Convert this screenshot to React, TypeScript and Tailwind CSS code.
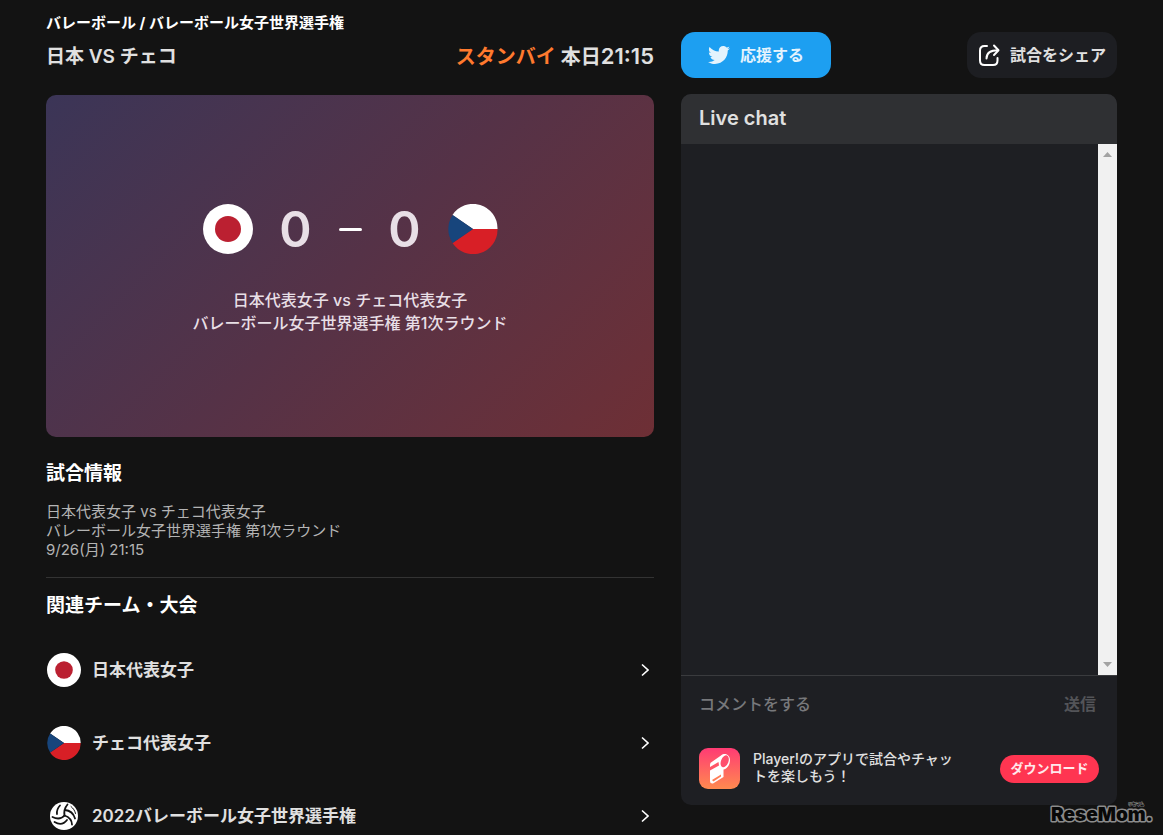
import { FaTwitter } from "react-icons/fa";

const JapanFlag = ({ className }: { className: string }) => (
    <svg viewBox="0 0 50 50" className={className} aria-hidden="true">
        <circle cx="25" cy="25" r="25" fill="#fff" />
        <circle cx="25" cy="25" r="13" fill="#bb2031" />
    </svg>
);

const CzechFlag = ({ className }: { className: string }) => (
    <svg viewBox="0 0 50 50" className={className} aria-hidden="true">
        <path d="M4.5 11 A24.5 24.5 0 0 1 49.5 25 H25 Z" fill="#fff" />
        <path d="M4.5 39 A24.5 24.5 0 0 0 49.5 25 H25 Z" fill="#d81f26" />
        <path d="M4.7 11 A24.5 24.5 0 0 0 4.7 39 L25 25 Z" fill="#17457c" />
    </svg>
);

const BallIcon = ({ className }: { className: string }) => (
    <svg viewBox="0 0 34 34" className={className} aria-hidden="true">
        <circle cx="17" cy="17" r="14" fill="#fff" />
        <g fill="none" stroke="#131313" strokeWidth="1.8" strokeLinecap="round">
            <path d="M10 15 C9.500 11.5 10.7 9 13 6.500" />
            <path d="M17.500 16.500 C16.800 12.500 17.700 8.800 20.500 5.500" />
            <path d="M17.800 11 C22.500 11.300 26.500 14.500 28 19.500" />
            <path d="M24 7.500 C26.500 9.500 28 12 28.500 14.500" strokeWidth="1" />
            <path d="M17.500 16.500 C14.500 19.800 10 20.300 5.500 18" />
            <path d="M7.500 23 C12.500 26 17 25 20 21" />
            <path d="M17.500 16.500 C22 18 24.800 21 25 25.500" />
        </g>
    </svg>
);

const ShareIcon = () => (
    <svg viewBox="0 0 22 24" className="h-6 w-[22px]" fill="none" stroke="#fff" strokeWidth="2" strokeLinecap="round" strokeLinejoin="round" aria-hidden="true">
        <path d="M9 3 H6.500 Q2 3 2 7.500 V17.500 Q2 22 6.500 22 H15 Q19.500 22 19.500 17.500 V15" />
        <path d="M8.500 15.500 C8.500 10 12 7.300 20 7.300" />
        <path d="M16 2.500 L20.500 7.300 L16 12" />
    </svg>
);

const WhistleIcon = () => (
    <svg viewBox="0 0 41 41" className="size-[41px] shrink-0" aria-hidden="true">
        <defs>
            <linearGradient id="whistle" x1="0" y1="0" x2="0" y2="1">
                <stop offset="0" stopColor="#ff3b74" />
                <stop offset="1" stopColor="#ff8a4f" />
            </linearGradient>
        </defs>
        <rect width="41" height="41" rx="9" fill="url(#whistle)" />
        <path d="M12 14.500 L22 7.500 C26 4 31 7 31 12 C31 17 28 21 24.500 21.500 L24.500 29 L14 35.500 Q11 36 11 33 V17 Q11 15.200 12 14.500 Z" fill="#fff" />
        <ellipse cx="25.700" cy="13.300" rx="3.700" ry="6.200" transform="rotate(22 25.700 13.300)" fill="#ff4f6d" />
        <path d="M11 19 L19.500 14 L20 17.500 L11 22.500 Z" fill="#ff5668" />
        <path d="M13 32 L22 26.500 V28.500 L14.500 33.500 Z" fill="#ff7d56" />
    </svg>
);

const Chevron = () => (
    <svg viewBox="0 0 8 14" className="mr-[5px] ml-auto h-3.5 w-2 shrink-0" fill="none" stroke="#fff" strokeWidth="1.600" aria-hidden="true">
        <path d="M1 1.500 L7 7 L1 12.500" />
    </svg>
);

const related = [
    { name: "日本代表女子", Icon: JapanFlag },
    { name: "チェコ代表女子", Icon: CzechFlag },
    { name: "2022バレーボール女子世界選手権", Icon: BallIcon },
];

const MatchPanel = () => {
    return (
        <main className="min-w-0">
            <p className="pt-3 text-[15px] leading-[22px] font-bold text-white">バレーボール / バレーボール女子世界選手権</p>
            <div className="mt-[7px] flex items-center justify-between text-xl leading-[30px] font-semibold text-[#e0e0e0]">
                <h1 className="text-[19px]">日本 VS チェコ</h1>
                <p><span className="text-[#ff7a2e]">スタンバイ</span> 本日<time className="text-[22px]">21:15</time></p>
            </div>
            <section className="mt-[23px] flex aspect-video flex-col items-center rounded-[10px] bg-linear-135 from-[#3b3557] via-[#553247] to-[#6e2f35] pt-[104px] text-[#e8dfe6]">
                <div className="flex items-center">
                    <JapanFlag className="size-[50px]" />
                    <span className="w-[86px] pt-0.5 text-center text-[49px] leading-[58px] font-semibold">0</span>
                    <span className="h-[3px] w-[23px] rounded-full bg-white" />
                    <span className="w-[86px] pt-0.5 text-center text-[49px] leading-[58px] font-semibold">0</span>
                    <CzechFlag className="size-[50px]" />
                </div>
                <p className="mt-[30px] text-center text-base leading-[23px] font-medium">
                    日本代表女子 vs チェコ代表女子<br />
                    バレーボール女子世界選手権 第1次ラウンド
                </p>
            </section>
            <section className="border-b border-[#333] pt-[23px] pb-[18px]">
                <h2 className="text-[19px] leading-7 font-bold text-white">試合情報</h2>
                <p className="mt-[14px] text-[15px] leading-[19px] text-[#b4b4b4]">
                    日本代表女子 vs チェコ代表女子<br />
                    バレーボール女子世界選手権 第1次ラウンド<br />
                    9/26(月) 21:15
                </p>
            </section>
            <section className="pt-[14px]">
                <h2 className="text-[19px] leading-7 font-bold text-white">関連チーム・大会</h2>
                <ul className="mt-[33px] flex flex-col gap-[39px]">
                    {related.map(({ name, Icon }) => (
                        <li key={name}>
                            <a href="#" className="flex items-center text-[17px] leading-[34px] font-semibold text-[#e0e0e0]">
                                <Icon className="mr-[11px] ml-px size-[34px] shrink-0" />
                                {name}
                                <Chevron />
                            </a>
                        </li>
                    ))}
                </ul>
            </section>
        </main>
    );
};

const ChatPanel = () => {
    return (
        <aside className="pt-8">
            <div className="flex justify-between">
                <button className="flex h-[46px] w-[150px] items-center justify-center gap-2.5 rounded-[14px] bg-[#1d9ff1] text-base font-bold text-[#e4f3fd]">
                    <FaTwitter className="size-[22px]" />
                    応援する
                </button>
                <button className="flex h-[46px] w-[150px] items-center justify-center gap-2.5 rounded-[14px] bg-[#1d1e22] text-base font-bold whitespace-nowrap text-[#e0e0e0]">
                    <ShareIcon />
                    試合をシェア
                </button>
            </div>
            <div className="mt-4 overflow-hidden rounded-[10px] bg-[#1e1f23]">
                <h2 className="bg-[#2f3033] px-[18px] pb-0.5 text-xl leading-[48px] font-semibold text-[#e0e0e0]">Live chat</h2>
                <div className="flex min-h-[531px] justify-end">
                    <div className="flex w-[19px] flex-col items-center justify-between bg-[#f1f1f1] py-2">
                        <svg viewBox="0 0 9 5" className="h-[5px] w-[9px]" fill="#a3a3a3" aria-hidden="true"><path d="M0 5 L4.500 0 L9 5 Z" /></svg>
                        <svg viewBox="0 0 9 5" className="h-[5px] w-[9px]" fill="#a3a3a3" aria-hidden="true"><path d="M0 0 L4.500 5 L9 0 Z" /></svg>
                    </div>
                </div>
                <form className="flex items-center justify-between border-t border-[#3a3b3e] px-[18px] pt-4 text-base font-medium">
                    <input aria-label="コメント" placeholder="コメントをする" className="h-6 min-w-0 flex-1 bg-transparent text-[#e0e0e0] outline-none placeholder:text-[#77787b]" />
                    <button type="button" className="mr-[3px] font-bold text-[#535458]">送信</button>
                </form>
                <div className="flex items-center px-[18px] pt-8 pb-4">
                    <WhistleIcon />
                    <p className="ml-[13px] w-[200px] pb-1 text-sm leading-[17px] font-medium text-[#e0e0e0]">Player!のアプリで試合やチャットを楽しもう！</p>
                    <button className="ml-auto h-7 w-[99px] rounded-full bg-[#ff3551] text-[13px] font-bold text-[#ffe9ec]">ダウンロード</button>
                </div>
            </div>
        </aside>
    );
};

const Watermark = () => (
    <svg viewBox="0 0 110 32" className="absolute right-2 bottom-0.5 h-8 w-[110px]" role="img" aria-label="ReseMom リセマム">
        <g stroke="#8c8c8c" fill="#080808" paintOrder="stroke" strokeLinejoin="round" fontWeight="900">
            <text x="6" y="20" fontSize="19" strokeWidth="3" fontFamily="Inter, sans-serif">ReseMom.</text>
            <text x="83" y="5" fontSize="4" strokeWidth="1" fontFamily="Noto Sans CJK JP, sans-serif">リセマム</text>
        </g>
    </svg>
);

export default function App() {
    return (
        <div className="relative min-h-screen bg-[#131313] font-['Inter','Noto_Sans_CJK_JP',sans-serif]">
            <div className="grid grid-cols-[minmax(0,1fr)_436px] gap-[27px] px-[46px]">
                <MatchPanel />
                <ChatPanel />
            </div>
            <Watermark />
        </div>
    );
}
